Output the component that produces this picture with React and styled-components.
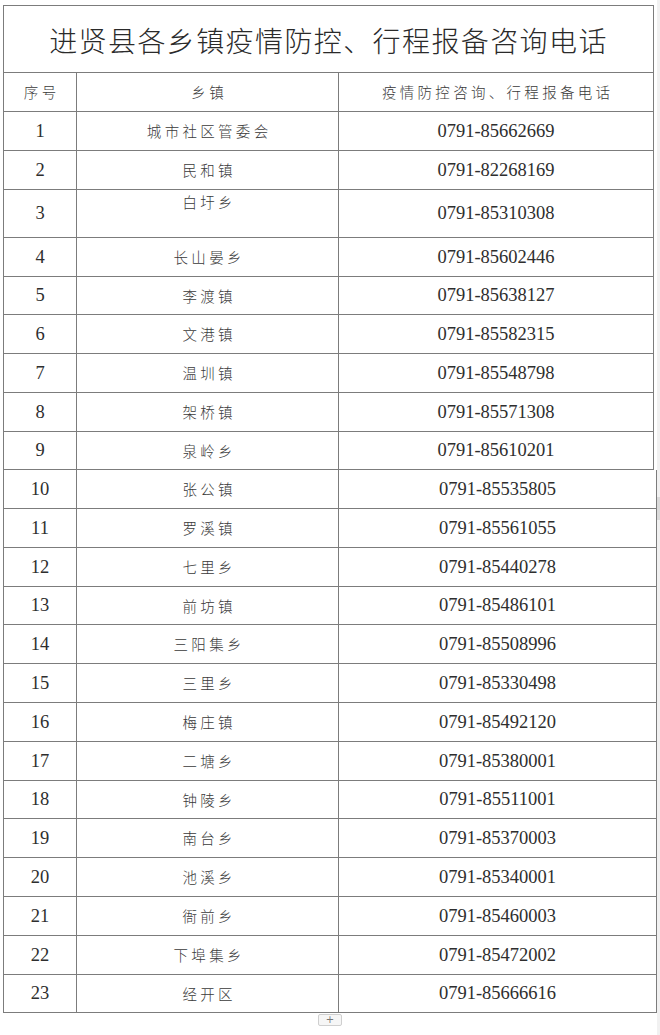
import React from 'react'
import styled, { createGlobalStyle } from 'styled-components'

const rows = [
    ['1', '城市社区管委会', '0791-85662669', 39],
    ['2', '民和镇', '0791-82268169', 39],
    ['3', '白圩乡', '0791-85310308', 48, true],
    ['4', '长山晏乡', '0791-85602446', 39],
    ['5', '李渡镇', '0791-85638127', 38],
    ['6', '文港镇', '0791-85582315', 39],
    ['7', '温圳镇', '0791-85548798', 39],
    ['8', '架桥镇', '0791-85571308', 39],
    ['9', '泉岭乡', '0791-85610201', 38],
    ['10', '张公镇', '0791-85535805', 39],
    ['11', '罗溪镇', '0791-85561055', 39],
    ['12', '七里乡', '0791-85440278', 39],
    ['13', '前坊镇', '0791-85486101', 38],
    ['14', '三阳集乡', '0791-85508996', 39],
    ['15', '三里乡', '0791-85330498', 39],
    ['16', '梅庄镇', '0791-85492120', 39],
    ['17', '二塘乡', '0791-85380001', 39],
    ['18', '钟陵乡', '0791-85511001', 38],
    ['19', '南台乡', '0791-85370003', 39],
    ['20', '池溪乡', '0791-85340001', 39],
    ['21', '衙前乡', '0791-85460003', 39],
    ['22', '下埠集乡', '0791-85472002', 39],
    ['23', '经开区', '0791-85666616', 38],
]

const App = () => (
    <Page>
        <GlobalStyle />
        <Main>
            <Title>进贤县各乡镇疫情防控、行程报备咨询电话</Title>
            <Row $h={39}>
                <Cell>序号</Cell>
                <Cell>乡镇</Cell>
                <Cell>疫情防控咨询、行程报备电话</Cell>
            </Row>
            {rows.map(([no, town, phone, h, top], i) => (
                <Row key={no} $h={h} $wide={i >= 9}>
                    <Num>{no}</Num>
                    <Cell $top={top}>{town}</Cell>
                    <Num>{phone}</Num>
                </Row>
            ))}
            <AddButton>+</AddButton>
        </Main>
        <Strip>
            <Mark />
        </Strip>
    </Page>
)

const GlobalStyle = createGlobalStyle`
    body {
        margin: 0;
        background: #fff;
    }
`

const Page = styled.div`
    display: flex;
    width: 660px;
    height: 1035px;
    overflow: hidden;
`

const Main = styled.div`
    flex: 1;
    padding: 5px 0 0 3px;
`

const Title = styled.div`
    box-sizing: border-box;
    width: 651px;
    height: 68px;
    border: 1px solid #7c7c7c;
    display: flex;
    align-items: center;
    justify-content: center;
    padding-top: 2px;
    font-family: "Noto Sans CJK SC", sans-serif;
    font-weight: 300;
    font-size: 28px;
    letter-spacing: 1.4px;
    color: #2a2a2a;
`

const Row = styled.div`
    box-sizing: border-box;
    display: grid;
    grid-template-columns: 73px 262px 1fr;
    width: ${p => (p.$wide ? 654 : 651)}px;
    height: ${p => p.$h}px;
    border: 1px solid #7c7c7c;
    border-top: none;
`

const Cell = styled.div`
    box-sizing: border-box;
    display: flex;
    align-items: ${p => (p.$top ? 'flex-start' : 'center')};
    justify-content: center;
    padding-top: ${p => (p.$top ? 2 : 0)}px;
    border-right: 1px solid #7c7c7c;
    font-family: "Noto Sans CJK SC", sans-serif;
    font-weight: 300;
    font-size: 14.5px;
    line-height: 20px;
    letter-spacing: 3.3px;
    text-indent: 3.3px;
    color: #3a3a3a;

    &:last-child {
        border-right: none;
    }
`

const Num = styled.div`
    box-sizing: border-box;
    display: flex;
    align-items: center;
    justify-content: center;
    border-right: 1px solid #7c7c7c;
    font-family: "Liberation Serif", serif;
    font-size: 18.5px;
    color: #2e2e2e;

    &:last-child {
        border-right: none;
    }
`

const AddButton = styled.div`
    box-sizing: border-box;
    width: 24px;
    height: 12px;
    margin: 1px 0 0 315px;
    border: 1px solid #cfcfcf;
    border-radius: 2px;
    background: #f6f6f6;
    display: flex;
    align-items: center;
    justify-content: center;
    font-family: "DejaVu Sans", sans-serif;
    font-size: 10px;
    line-height: 1;
    color: #777;
`

const Strip = styled.div`
    width: 3px;
    background: #f1f1f1;
    display: flex;
    flex-direction: column;
`

const Mark = styled.div`
    height: 23px;
    margin-top: 497px;
    background: #dadada;
`

export default App
